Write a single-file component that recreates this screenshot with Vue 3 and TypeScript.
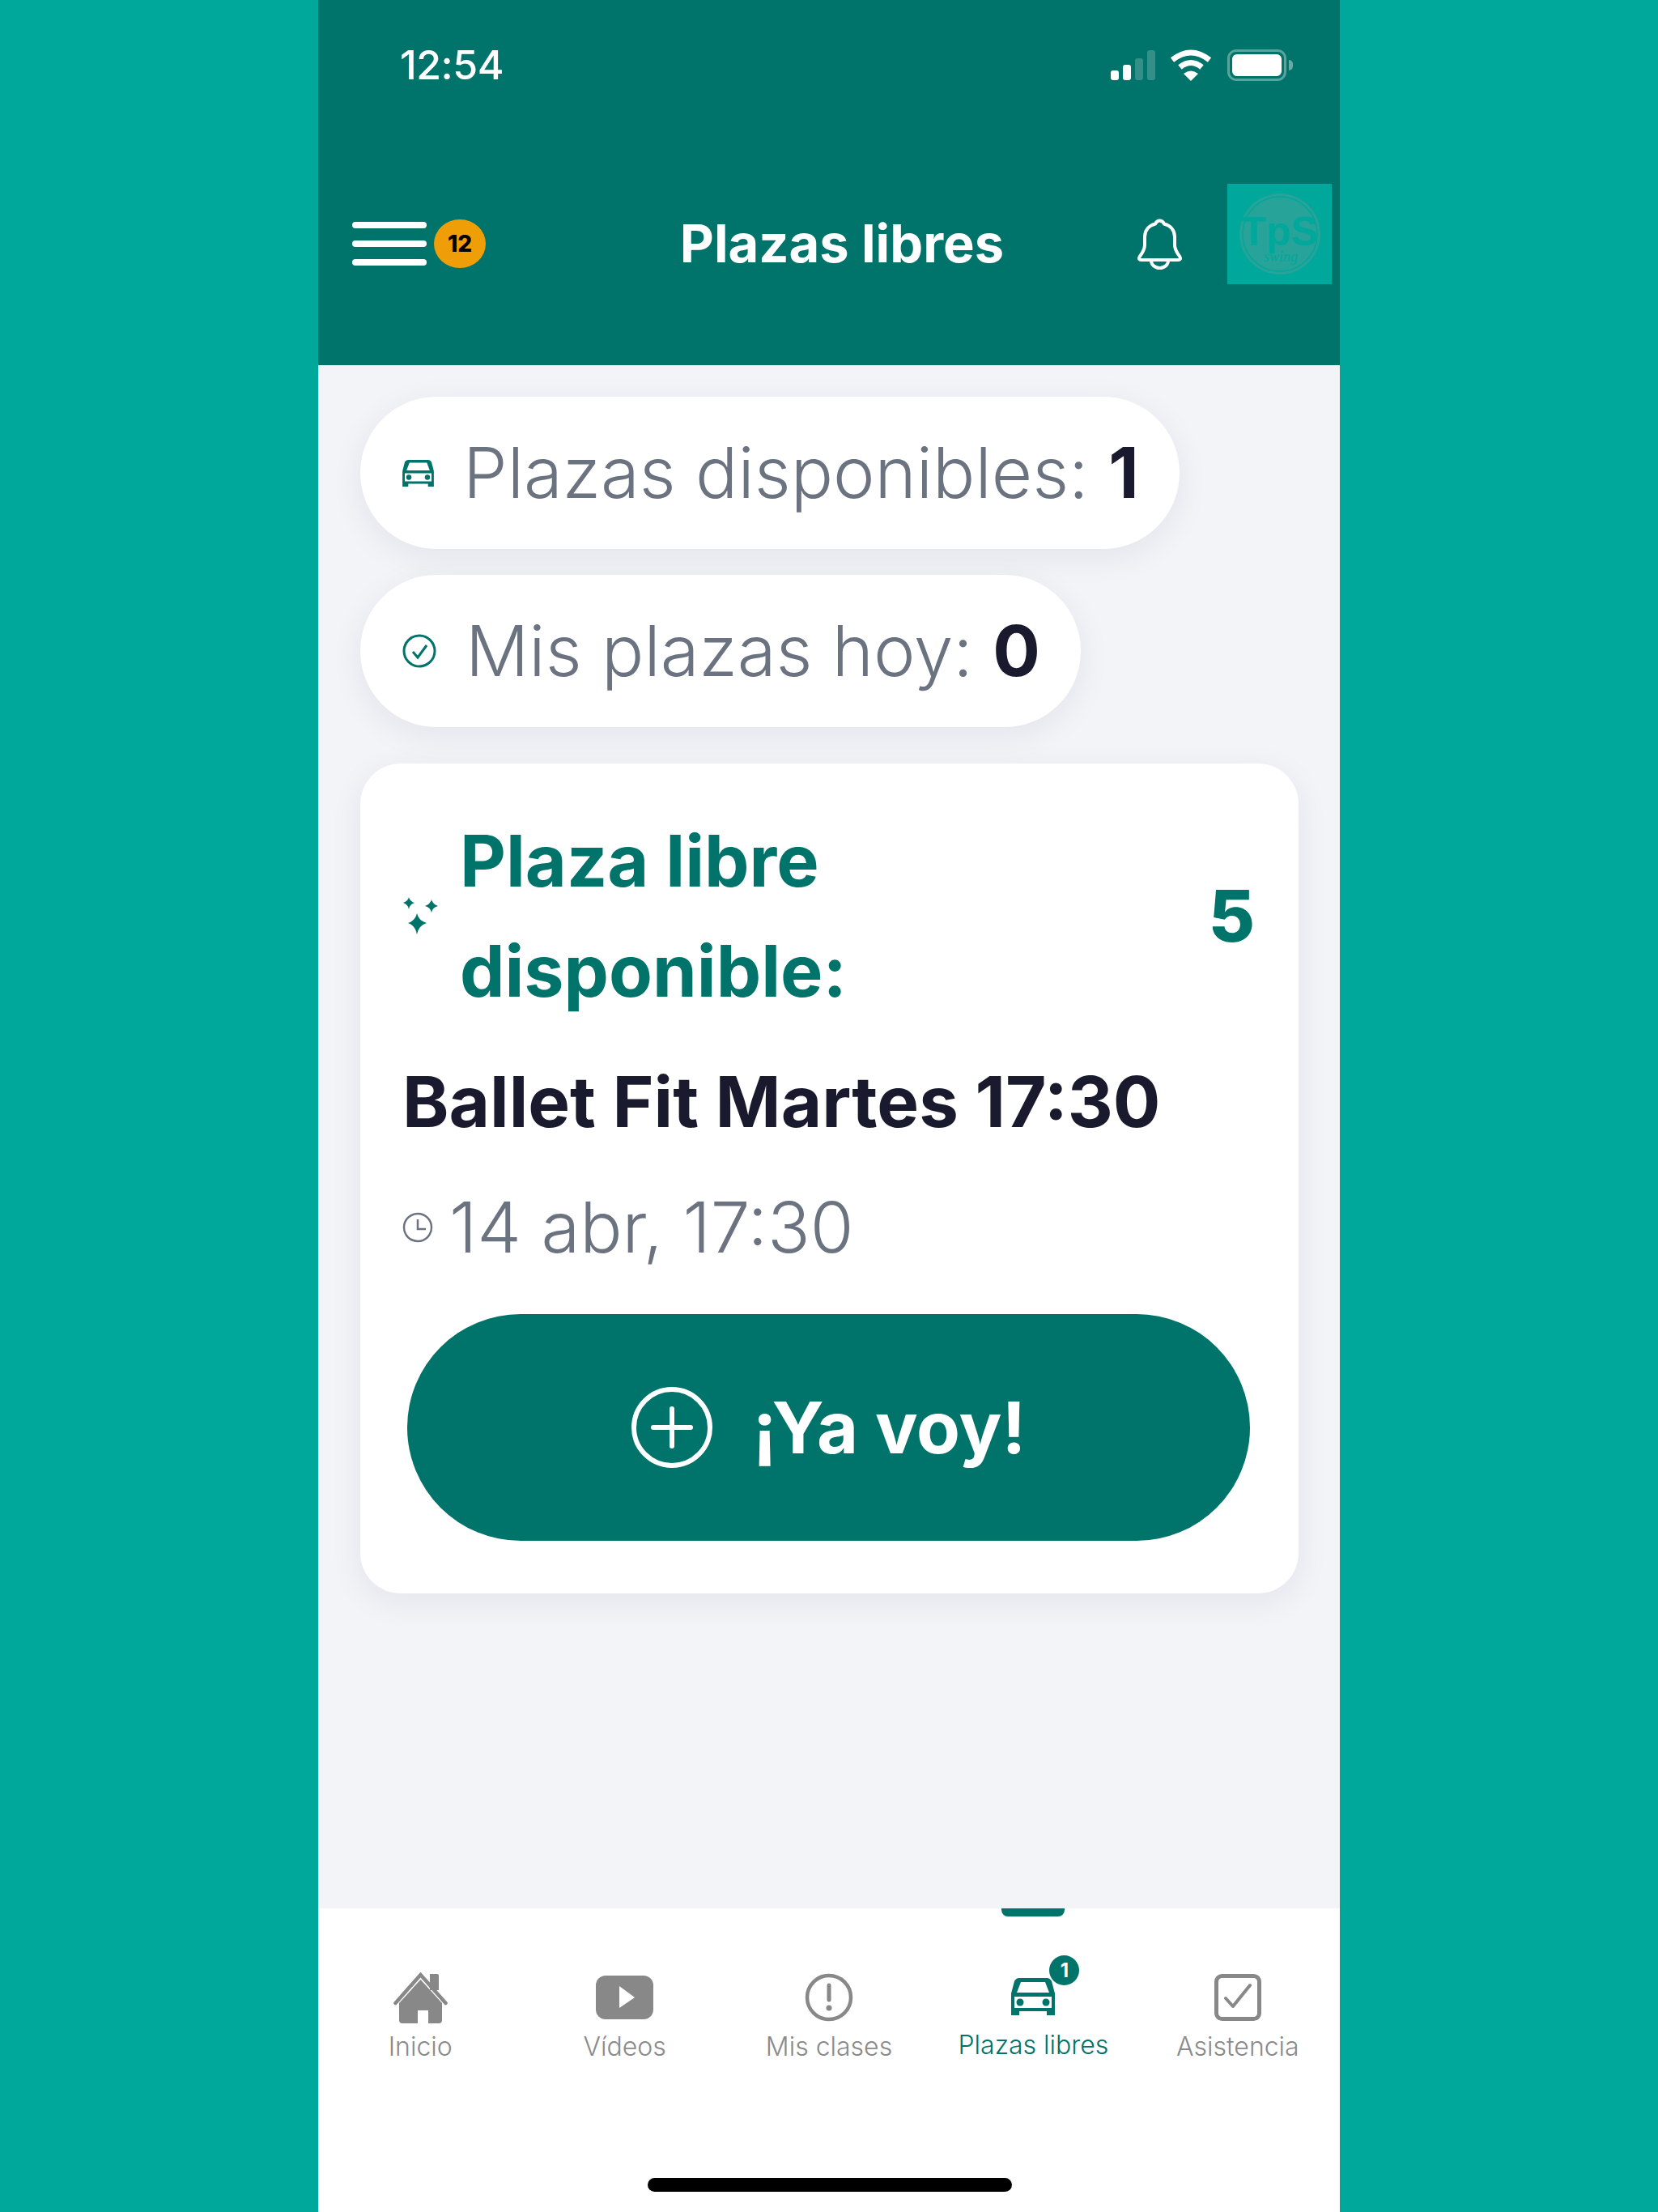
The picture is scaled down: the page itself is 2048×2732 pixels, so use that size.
<script setup lang="ts">
interface Tab { label: string; active?: boolean; kind: string }
const tabs: Tab[] = [
  { label: 'Inicio', kind: 'home' },
  { label: 'Vídeos', kind: 'video' },
  { label: 'Mis clases', kind: 'alert' },
  { label: 'Plazas libres', kind: 'car', active: true },
  { label: 'Asistencia', kind: 'check' },
]
</script>

<template>
  <div class="page">
    <div class="phone">
      <header class="header">
        <div class="status">
          <span class="time">12:54</span>
          <div class="status-icons">
            <div class="signal">
              <i class="s1"></i><i class="s2"></i><i class="s3"></i><i class="s4"></i>
            </div>
            <svg class="wifi" viewBox="0 0 52 39" width="52" height="39">
              <path d="M3 13 Q26 -5 49 13" fill="none" stroke="#fff" stroke-width="7" />
              <path d="M12.5 22 Q26 11 39.5 22" fill="none" stroke="#fff" stroke-width="7" />
              <path d="M17 30 Q26 23 35 30 L26 39Z" fill="#fff" />
            </svg>
            <div class="battery"><div class="battery-fill"></div></div>
            <div class="battery-cap"></div>
          </div>
        </div>
        <div class="nav">
          <div class="nav-left">
            <div class="burger"><i></i><i></i><i></i></div>
            <span class="count">12</span>
          </div>
          <h1 class="title">Plazas libres</h1>
          <div class="nav-right">
            <svg class="bell" viewBox="0 0 55 63" width="55" height="63">
              <path d="M27.5 2.5c3 0 4.5 2 5.5 4 8 2 13 8 13 16v10c0 6 3 10 6 14 2 3 1 4.5-2 4.5H5c-3 0-4-1.5-2-4.5 3-4 6-8 6-14v-10c0-8 5-14 13-16 1-2 2.5-4 5.5-4Z" fill="none" stroke="#fff" stroke-width="4" stroke-linejoin="round" />
              <path d="M17 52a10.500 9 0 0 0 21 0" fill="none" stroke="#fff" stroke-width="4" />
            </svg>
            <div class="logo">
              <svg viewBox="0 0 129 124" width="129" height="124">
                <circle cx="65" cy="62" r="50" fill="#27A39A" />
                <circle cx="65" cy="62" r="46" fill="none" stroke="#00A79B" stroke-width="1.500" />
                <text x="65" y="76" text-anchor="middle" class="logo-main">TpS</text>
                <text x="66" y="96" text-anchor="middle" class="logo-sub">swing</text>
              </svg>
            </div>
          </div>
        </div>
      </header>

      <main class="content">
        <div class="pill">
          <svg class="pill-icon" viewBox="0 0 54 46" width="39" height="33">
            <path fill-rule="evenodd" fill="#00736A" d="M10 0H44C47 0 49 2 50 4L54 19V46H44V41H10V46H0V19L4 4C5 2 7 0 10 0ZM12 5 7 18H47L42 5ZM4 23V37H50V23Z" />
            <circle cx="11" cy="30" r="4.500" fill="#00736A" />
            <circle cx="43" cy="30" r="4.500" fill="#00736A" />
          </svg>
          <span class="pill-text">Plazas disponibles: <b>1</b></span>
        </div>
        <div class="pill second">
          <svg class="pill-icon" viewBox="0 0 42 42" width="42" height="42">
            <circle cx="21" cy="21" r="19" fill="none" stroke="#00736A" stroke-width="3" />
            <path d="M13 22l6 7 11-15" fill="none" stroke="#00736A" stroke-width="3" />
          </svg>
          <span class="pill-text">Mis plazas hoy: <b>0</b></span>
        </div>

        <section class="card">
          <div class="card-head">
            <svg class="sparkle" viewBox="0 0 45 47" width="45" height="47">
              <path fill="#00736A" d="M18 11q2 9 12 12q-10 3-12 14q-2-11-11-14q9-3 11-12Z" transform="translate(0 9)" />
              <path fill="#00736A" d="M8 0q1 5 7 7q-6 2-7 8q-1-6-7-8q6-2 7-7Z" />
              <path fill="#00736A" d="M36 3q1 5 8 8q-7 2-8 8q-1-6-8-8q7-3 8-8Z" />
            </svg>
            <h2 class="card-title">Plaza libre<br />disponible:</h2>
            <span class="card-count">5</span>
          </div>
          <div class="class-name">Ballet Fit Martes 17:30</div>
          <div class="when">
            <svg viewBox="0 0 38 38" width="38" height="38">
              <circle cx="19" cy="19" r="17" fill="none" stroke="#6B7280" stroke-width="2.500" />
              <path d="M19 9V21H29" fill="none" stroke="#6B7280" stroke-width="2.500" />
            </svg>
            <span>14 abr, 17:30</span>
          </div>
          <button class="go">
            <svg viewBox="0 0 100 100" width="100" height="100">
              <circle cx="50" cy="50" r="47" fill="none" stroke="#fff" stroke-width="6" />
              <path d="M50 27V73M27 50H73" fill="none" stroke="#fff" stroke-width="6" stroke-linecap="round" />
            </svg>
            <span>¡Ya voy!</span>
          </button>
        </section>
      </main>

      <nav class="tabbar">
        <div v-for="t in tabs" :key="t.label" class="tab" :class="{ active: t.active }">
          <i v-if="t.active" class="indicator"></i>
          <div class="tab-icon">
            <svg v-if="t.kind === 'home'" viewBox="0 0 67 63" width="67" height="63">
              <path fill="#888" d="M45 2H54Q56 2 56 4V22H45Z" />
              <path fill="none" stroke="#888" stroke-width="4.500" stroke-linecap="round" d="M2.500 38 33.500 3 64.500 38" />
              <path fill="#888" d="M7 38 33.500 9 60 38V59Q60 63 56 63H43V47H30V63H11Q7 63 7 59Z" transform="translate(0 0)" />
            </svg>
            <svg v-else-if="t.kind === 'video'" viewBox="0 0 71 54" width="71" height="54">
              <rect width="71" height="54" rx="12" fill="#888" />
              <path d="M29 13 48 27 29 40Z" fill="#fff" />
            </svg>
            <svg v-else-if="t.kind === 'alert'" viewBox="0 0 60 60" width="60" height="60">
              <circle cx="30" cy="30" r="27" fill="none" stroke="#888" stroke-width="4.500" />
              <path d="M30 15V33" stroke="#888" stroke-width="5" stroke-linecap="round" />
              <circle cx="30" cy="43" r="3.500" fill="#888" />
            </svg>
            <div v-else-if="t.kind === 'car'" class="car-wrap">
              <svg viewBox="0 0 54 46" width="54" height="46">
                <path fill-rule="evenodd" fill="#00736A" d="M10 0H44C47 0 49 2 50 4L54 19V46H44V41H10V46H0V19L4 4C5 2 7 0 10 0ZM12 5 7 18H47L42 5ZM4 23V37H50V23Z" />
                <circle cx="11" cy="30" r="4.500" fill="#00736A" />
                <circle cx="43" cy="30" r="4.500" fill="#00736A" />
              </svg>
              <span class="tab-badge">1</span>
            </div>
            <svg v-else viewBox="0 0 58 58" width="58" height="58">
              <rect x="2.500" y="2.500" width="53" height="53" rx="7" fill="none" stroke="#888" stroke-width="5" />
              <path d="M14 30l9 10 21-26" fill="none" stroke="#888" stroke-width="4" stroke-linecap="round" stroke-linejoin="round" />
            </svg>
          </div>
          <span class="tab-label">{{ t.label }}</span>
        </div>
        <i class="home-bar"></i>
      </nav>
    </div>
  </div>
</template>

<style>
html, body { margin: 0; background: #00A79B; }
</style>

<style scoped>
.page {
  display: flex;
  justify-content: center;
  height: 2732px;
  background: #00A79B;
  font-family: Inter, "Liberation Sans", sans-serif;
}
.phone {
  width: 1262px;
  display: flex;
  flex-direction: column;
  background: #F3F4F8;
}
.header {
  height: 451px;
  background: #00736A;
  color: #fff;
  flex: none;
}
.status {
  height: 160px;
  display: flex;
  align-items: center;
  justify-content: space-between;
  padding: 0 58px 0 101px;
  box-sizing: border-box;
}
.time { font-size: 50px; font-weight: 500; letter-spacing: -0.5px; }
.status-icons { display: flex; align-items: center; }
.signal { display: flex; align-items: flex-end; gap: 5px; height: 37px; margin-right: 18px; }
.signal i { width: 10px; background: #fff; border-radius: 3px; display: block; }
.s1 { height: 12px; }
.s2 { height: 19px; }
.s3 { height: 27px; opacity: .2; }
.s4 { height: 37px; opacity: .2; }
.wifi { margin-right: 19px; }
.battery {
  width: 73px; height: 39px; box-sizing: border-box;
  border: 3px solid rgba(255,255,255,.35); border-radius: 11px;
  padding: 3px;
}
.battery-fill { width: 100%; height: 100%; background: #fff; border-radius: 6px; }
.battery-cap {
  width: 5px; height: 13px; margin-left: 3px;
  background: rgba(255,255,255,.4); border-radius: 0 6px 6px 0;
}
.nav {
  height: 282px;
  display: grid;
  grid-template-columns: 1fr auto 1fr;
  align-items: center;
  padding: 0 10px 0 42px;
}
.nav-left { display: flex; align-items: center; gap: 9px; }
.burger { display: flex; flex-direction: column; gap: 15px; width: 92px; }
.burger i { display: block; height: 8px; background: #fff; border-radius: 4px; }
.count {
  width: 64px; height: 60px; border-radius: 50%;
  background: #F09E07; color: #000;
  display: flex; align-items: center; justify-content: center;
  font-size: 28px; font-weight: 800;
}
.title { margin: 0; font-size: 65px; font-weight: 700; line-height: 80px; letter-spacing: 0; }
.nav-right { display: flex; justify-content: flex-end; align-items: center; gap: 56px; }
.bell { margin-top: 1px; }
.logo {
  width: 129px; height: 124px; background: #00A79B;
  margin-top: -24px; display: block;
}
.logo svg { display: block; }
.logo-main { font-family: "Liberation Sans", sans-serif; font-size: 50px; font-weight: 700; fill: #00A79B; }
.logo-sub { font-family: "Liberation Serif", serif; font-size: 18px; font-style: italic; fill: #00A79B; }

.content {
  flex: 1;
  display: flex;
  flex-direction: column;
  align-items: flex-start;
  padding: 39px 51px 0 52px;
  min-height: 0;
}
.pill {
  height: 188px;
  box-sizing: border-box;
  display: flex;
  align-items: center;
  gap: 36px;
  padding: 0 50px 0 52px;
  background: #fff;
  border-radius: 94px;
  box-shadow: 0 10px 40px rgba(30,35,60,.07);
}
.second { margin-top: 32px; }
.pill-icon { flex: none; }
.pill-text { font-size: 87px; font-weight: 300; color: #6B7280; white-space: nowrap; line-height: 110px; }
.pill-text b { font-weight: 700; color: #1A1A2E; }
.card {
  margin-top: 45px;
  width: 100%;
  box-sizing: border-box;
  padding: 52px 54px 65px 52px;
  background: #fff;
  border-radius: 50px;
  box-shadow: 0 10px 40px rgba(30,35,60,.07);
}
.card-head { display: flex; align-items: center; gap: 26px; }
.sparkle { flex: none; }
.card-title {
  flex: 1; margin: 0;
  font-size: 88px; font-weight: 700; line-height: 136px; color: #00736A;
}
.card-count { font-size: 88px; font-weight: 800; color: #00736A; }
.class-name {
  margin-top: 39px;
  font-size: 87px; font-weight: 700; line-height: 110px; color: #1A1A2E; white-space: nowrap;
}
.when {
  margin-top: 45px;
  display: flex; align-items: center; gap: 20px;
  font-size: 87px; font-weight: 300; line-height: 110px; color: #6B7280;
}
.go {
  margin: 52px 6px 0;
  width: calc(100% - 12px);
  height: 280px;
  border: 0;
  border-radius: 140px;
  background: #00736A;
  color: #fff;
  font-family: inherit;
  font-size: 88px;
  font-weight: 700;
  display: flex;
  align-items: center;
  justify-content: center;
  gap: 50px;
}
.tabbar {
  height: 375px;
  flex: none;
  background: #fff;
  display: flex;
  position: relative;
}
.tab {
  flex: 1;
  display: flex;
  flex-direction: column;
  align-items: center;
  padding-top: 79px;
  position: relative;
  color: #8A8A8A;
}
.indicator {
  position: absolute; top: 0; left: 50%; margin-left: -39px;
  width: 78px; height: 10px; background: #00736A;
  border-radius: 0 0 8px 8px;
}
.tab-icon { height: 62px; display: flex; align-items: center; justify-content: center; }
.tab-icon svg { display: block; }
.tab-label { margin-top: 10px; font-size: 32px; font-weight: 300; line-height: 40px; white-space: nowrap; }
.active { color: #00736A; }
.active .tab-label { margin-top: 8px; }
.car-wrap { position: relative; margin-top: -3px; }
.tab-badge {
  position: absolute; left: 47px; top: -28px;
  width: 37px; height: 37px; border-radius: 50%;
  background: #00736A; color: #fff;
  font-size: 24px; font-weight: 700;
  display: flex; align-items: center; justify-content: center;
}
.home-bar {
  position: absolute; left: 407px; top: 333px;
  width: 450px; height: 17px; border-radius: 9px; background: #000;
}
</style>
